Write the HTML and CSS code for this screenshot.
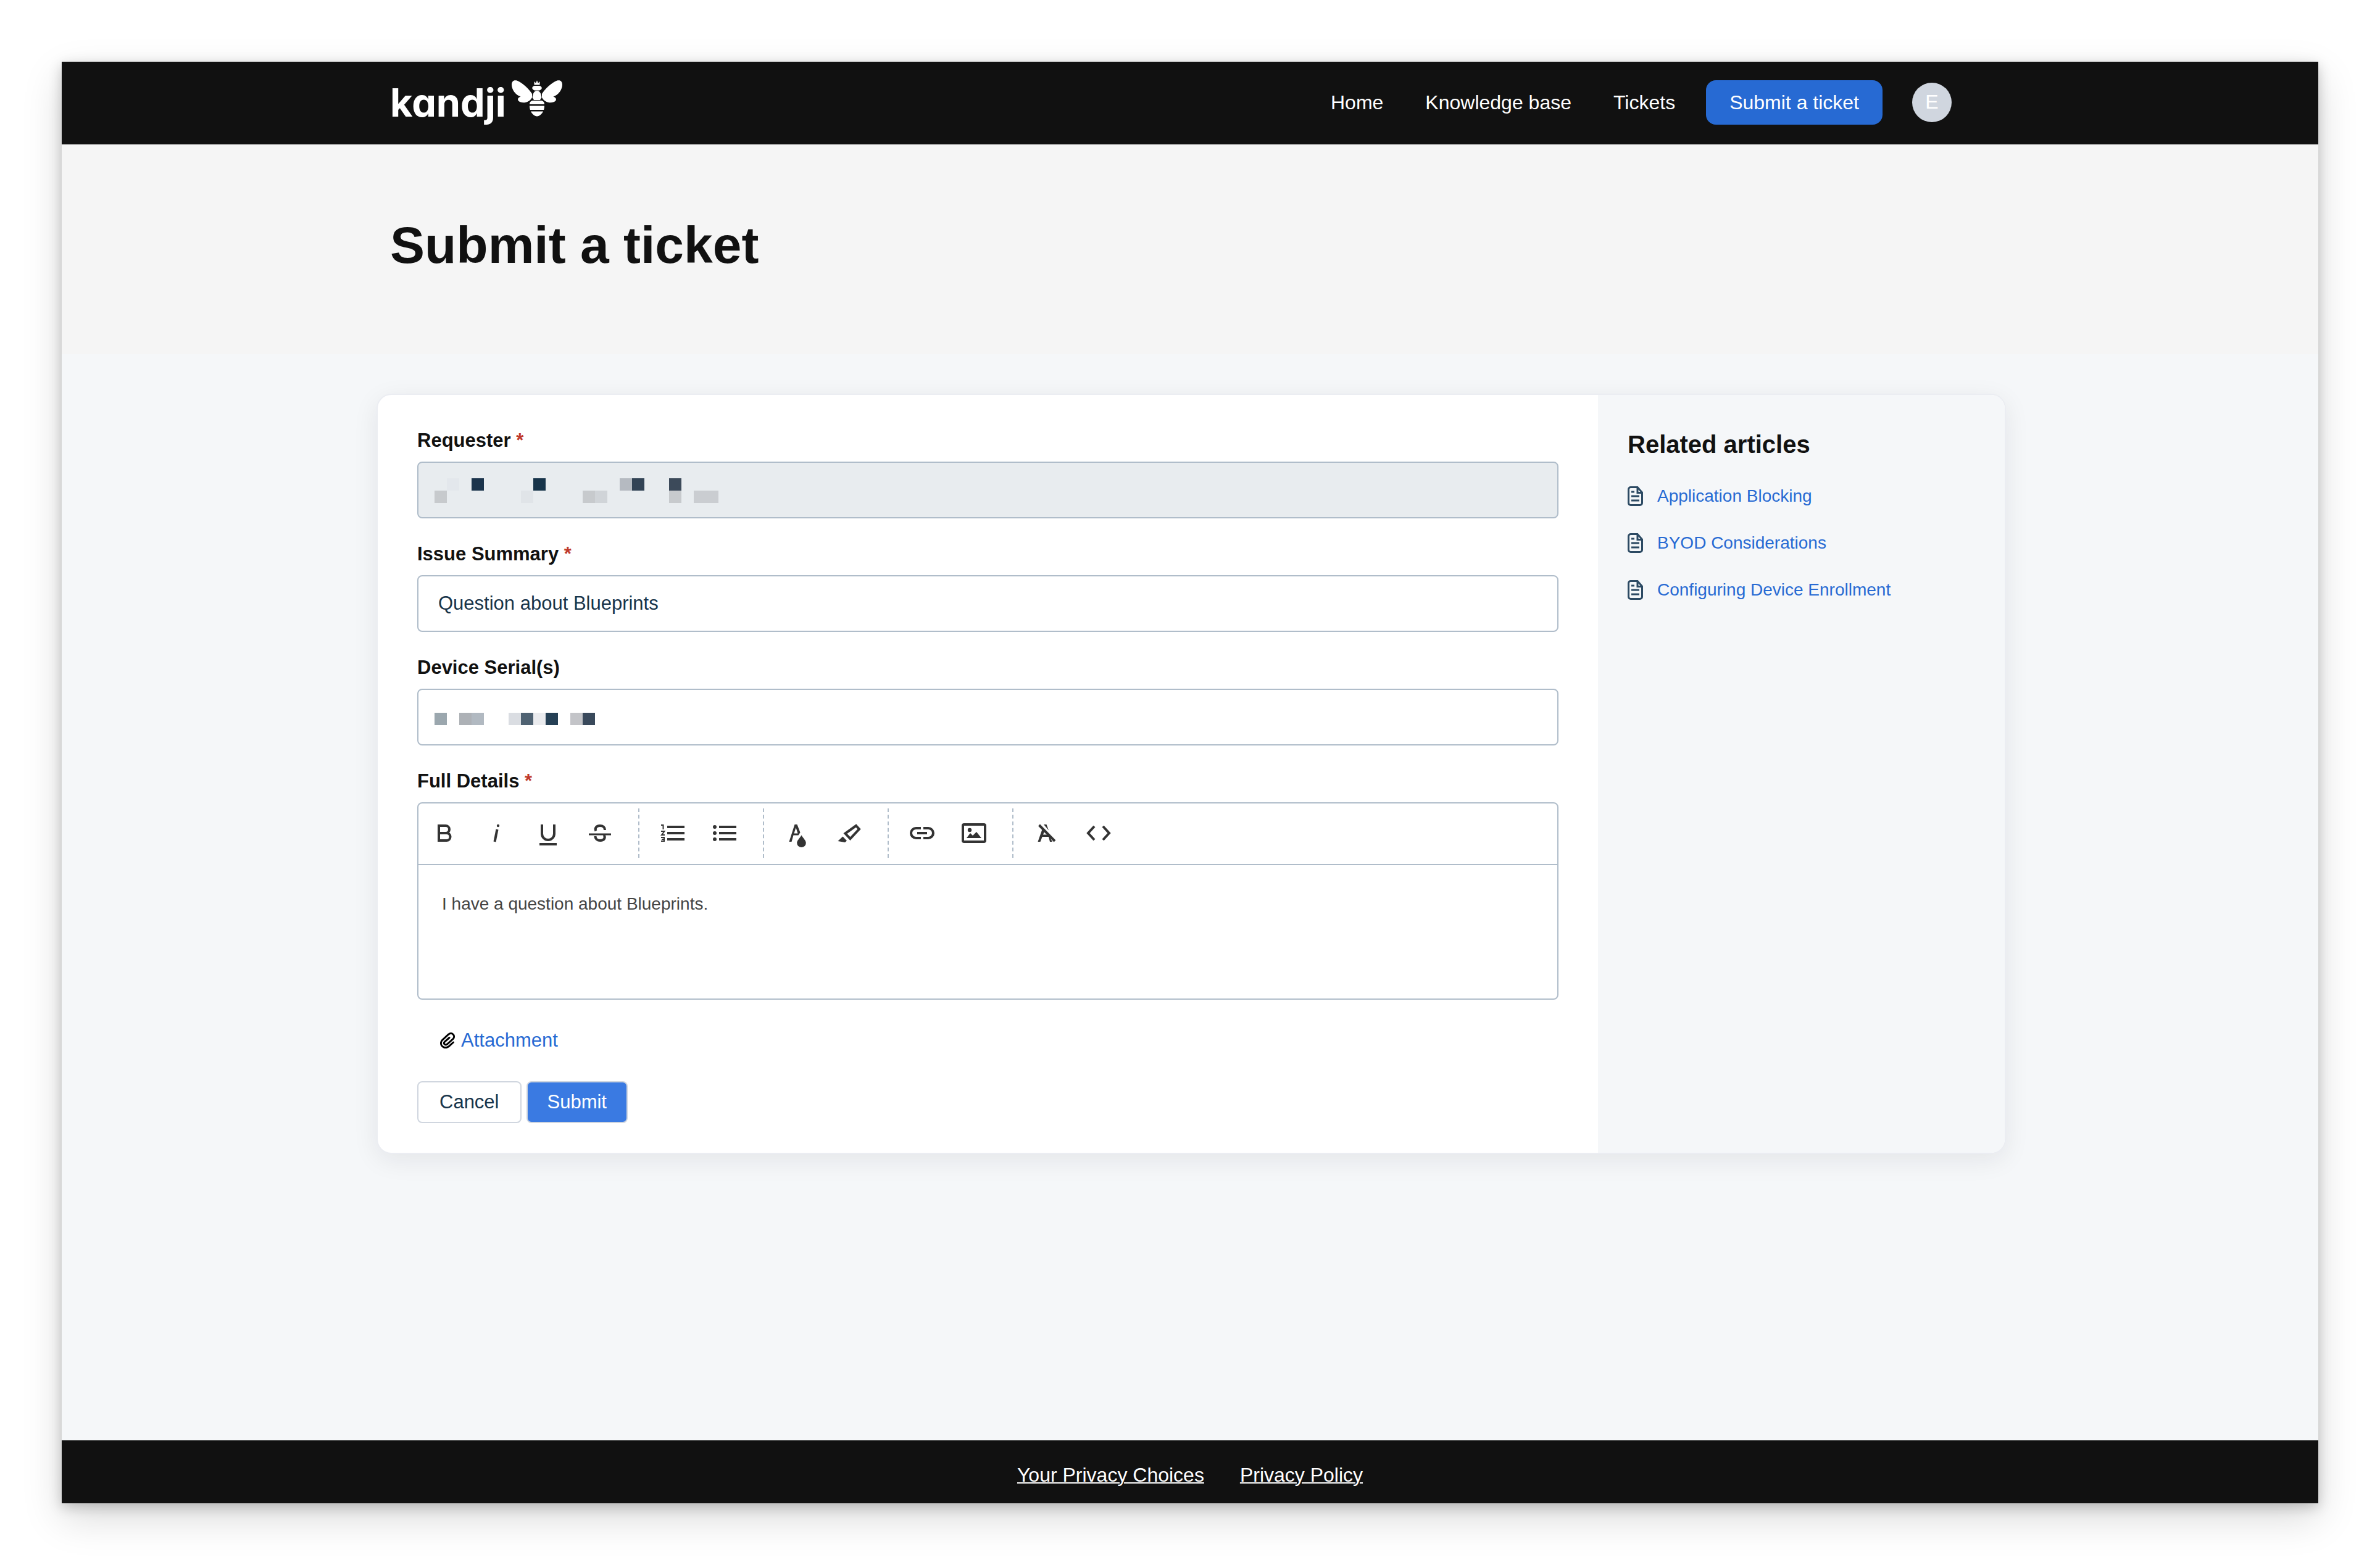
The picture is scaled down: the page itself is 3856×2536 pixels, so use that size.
FILE: index.html
```html
<!DOCTYPE html>
<html lang="en">
<head>
    <meta charset="UTF-8">
    <meta name="viewport" content="width=device-width, initial-scale=1.0">
    <title>Submit a ticket</title>
    <link rel="stylesheet" href="styles.css">
</head>
<body>
    <div class="page">
        <header class="header">
            <div class="container header-inner">
                <a class="logo" href="#">
                    <span class="logo-text">kandji</span>
                    <svg class="logo-bee" viewBox="0 0 82 59" aria-hidden="true">
                        <path id="wing" d="M33 22C28 14 17 4 9 .8 3-.8 0 2 0 7.500c0 7 6 16.500 14.500 19C10 28 9 31 11 33.500c5 4.500 17 4 22-5.500z"/>
                        <use href="#wing" transform="matrix(-1 0 0 1 82 0)"/>
                        <path d="M36.500 7.500V2l2.700 2.800L41 .3l1.800 4.500L45.500 2v5.500z"/>
                        <path d="M37 9h8c5 1 5 6 0 7.500h-8c-5-1.500-5-6.500 0-7.500z"/>
                        <path d="M41 17c-4.500 0-6.500 4-7.500 11l2.500 4h10l2.500-4c-1-7-3-11-7.500-11z"/>
                        <path d="M35 33h12c4 0 6 2.500 6 6H29c0-3.500 2-6 6-6z"/>
                        <path d="M29 41.500h24c0 2.500-.3 4.500-1 6.500H30c-.7-2-1-4-1-6.500z"/>
                        <path d="M31 50.500h20c-2 4-6 8-10 8s-8-4-10-8z"/>
                    </svg>
                </a>
                <nav class="nav">
                    <a href="#">Home</a>
                    <a href="#">Knowledge base</a>
                    <a href="#">Tickets</a>
                </nav>
                <a class="nav-btn" href="#">Submit a ticket</a>
                <button type="button" class="avatar" aria-label="Account">E</button>
            </div>
        </header>

        <section class="hero">
            <div class="container">
                <h1>Submit a ticket</h1>
            </div>
        </section>

        <main class="main">
            <div class="card">
                <form class="ticket-form">
                    <div class="field">
                        <label for="requester">Requester <span class="required">*</span></label>
                        <div class="input-wrap">
                            <input type="text" id="requester" name="requester" disabled>
                            <svg class="redacted redacted-requester" viewBox="0 0 460 40" aria-hidden="true">
                                <path fill="#e3e7ec" d="M20 0h20v20H20z"/>
                                <path fill="#1b344c" d="M60 0h20v20H60z"/>
                                <path fill="#17344a" d="M160 0h20v20h-20z"/>
                                <path fill="#b5bac1" d="M300 0h20v20h-20z"/>
                                <path fill="#324355" d="M320 0h20v20h-20z"/>
                                <path fill="#3c4a5a" d="M380 0h20v20h-20z"/>
                                <path fill="#e0e4e8" d="M140 20h20v20h-20z"/>
                                <path fill="#c7cacd" d="M0 20h20v20H0zM240 20h20v20h-20zM380 20h20v20h-20z"/>
                                <path fill="#d0d4d8" d="M260 20h20v20h-20z"/>
                                <path fill="#cacdd1" d="M420 20h40v20h-40z"/>
                            </svg>
                        </div>
                    </div>

                    <div class="field">
                        <label for="summary">Issue Summary <span class="required">*</span></label>
                        <input type="text" id="summary" name="summary" value="Question about Blueprints" required>
                    </div>

                    <div class="field">
                        <label for="serial">Device Serial(s)</label>
                        <div class="input-wrap">
                            <input type="text" id="serial" name="serial">
                            <svg class="redacted redacted-serial" viewBox="0 0 260 20" aria-hidden="true">
                                <path fill="#9ba7ae" d="M0 0h20v20H0z"/>
                                <path fill="#adb1b6" d="M40 0h20v20H40z"/>
                                <path fill="#b1b9c1" d="M60 0h20v20H60z"/>
                                <path fill="#dadde2" d="M120 0h20v20h-20z"/>
                                <path fill="#4f6272" d="M140 0h20v20h-20z"/>
                                <path fill="#eaebee" d="M160 0h20v20h-20z"/>
                                <path fill="#254055" d="M180 0h20v20h-20z"/>
                                <path fill="#c3c4c8" d="M220 0h20v20h-20z"/>
                                <path fill="#39495b" d="M240 0h20v20h-20z"/>
                            </svg>
                        </div>
                    </div>

                    <div class="field">
                        <label for="details">Full Details <span class="required">*</span></label>
                        <div class="editor">
                            <div class="toolbar">
                                <div class="tool-group">
                                    <button type="button" class="tool" aria-label="Bold">
                                        <svg viewBox="0 0 40 40"><path class="line" d="M11 8h11a6 6 0 0 1 0 12H11zM11 20h12.500a6 6 0 0 1 0 12H11z"/></svg>
                                    </button>
                                    <button type="button" class="tool" aria-label="Italic">
                                        <svg viewBox="0 0 40 40"><circle cx="23" cy="8" r="2.200"/><path class="line" d="M21.500 14l-4 20"/></svg>
                                    </button>
                                    <button type="button" class="tool" aria-label="Underline">
                                        <svg viewBox="0 0 40 40"><path class="line" d="M10 6v15a10 10 0 0 0 20 0V6M6 38h28"/></svg>
                                    </button>
                                    <button type="button" class="tool" aria-label="Strikethrough">
                                        <svg viewBox="0 0 40 40"><path class="line" d="M13.500 16.500C11 12 14.500 8 20 8c5 0 8 2.500 8 7M12.500 25c0 4.500 3.500 7 8 7 6.500 0 9-4.500 6-9"/><path d="M2 20.500h36v3H2z"/></svg>
                                    </button>
                                </div>
                                <div class="tool-group">
                                    <button type="button" class="tool" aria-label="Numbered list">
                                        <svg viewBox="0 0 40 40"><path d="M11 8h28v4H11zM11 18h28v4H11zM11 28h28v4H11z"/><path class="line thin" d="M1 7h3.500v7M1 17h5.500L2 23h5M1 27h5v6H1M2 30h4"/></svg>
                                    </button>
                                    <button type="button" class="tool" aria-label="Bulleted list">
                                        <svg viewBox="0 0 40 40"><path d="M11 8h28v4H11zM11 18h28v4H11zM11 28h28v4H11z"/><circle cx="4" cy="10" r="3"/><circle cx="4" cy="20" r="3"/><circle cx="4" cy="30" r="3"/></svg>
                                    </button>
                                </div>
                                <div class="tool-group">
                                    <button type="button" class="tool" aria-label="Font color">
                                        <svg viewBox="0 0 40 40"><path d="M6.500 34l9-28h4l5 13-3 4.500h-8L10.500 34zM17.500 11l-3 9.500h6z" fill-rule="evenodd"/><path d="M26.500 23.500c3 5 7.300 8.500 7.300 12.500a7.300 7 0 0 1-14.600 0c0-4 4.300-7.500 7.300-12.500z"/></svg>
                                    </button>
                                    <button type="button" class="tool" aria-label="Highlight">
                                        <svg viewBox="0 0 40 40"><path d="M1.500 33l8-7.500 6.500 7-3 2.500z"/><path class="line" d="M31 8l5 5.500-14.500 15.500-8-8.500z"/></svg>
                                    </button>
                                </div>
                                <div class="tool-group">
                                    <button type="button" class="tool" aria-label="Link">
                                        <svg viewBox="0 0 40 40"><path class="line" d="M18 12h-8a8 8 0 0 0 0 16h8M22 12h8a8 8 0 0 1 0 16h-8M12 20h16"/></svg>
                                    </button>
                                    <button type="button" class="tool" aria-label="Insert image">
                                        <svg viewBox="0 0 40 40"><rect class="line" x="2" y="6" width="36" height="28" rx="2"/><circle cx="13" cy="15" r="3.200"/><path d="M8 28l6-8 4 4 6-6 8 10z"/></svg>
                                    </button>
                                </div>
                                <div class="tool-group">
                                    <button type="button" class="tool" aria-label="Remove format">
                                        <svg viewBox="0 0 40 40"><path d="M5.500 34l7-20 3.500 3.500L9.500 34zM15 6h4.500l3.500 9.500zM9.500 22.500h13l6.500 11.500h-4l-2-8H9.500z"/><path class="line" d="M7.500 7L33 33"/></svg>
                                    </button>
                                    <button type="button" class="tool" aria-label="Source">
                                        <svg viewBox="0 0 40 40"><path class="line" d="M13 9L3 20l10 11M27 9l10 11-10 11"/></svg>
                                    </button>
                                </div>
                            </div>
                            <textarea id="details" name="details" required>I have a question about Blueprints.</textarea>
                        </div>
                    </div>

                    <div class="attachment">
                        <svg viewBox="0 0 24 26" aria-hidden="true"><path d="M21.500 16L14 22.800C6 28-2 20 3 13L13.500 3.200c6-4.500 12 2.300 7.500 7.300L11.500 19c-3.500 2.500-7-1-4-4L15 8.500"/></svg>
                        <a href="#">Attachment</a>
                    </div>

                    <div class="actions">
                        <button type="button" class="btn">Cancel</button>
                        <button type="submit" class="btn btn-primary">Submit</button>
                    </div>
                </form>

                <aside class="sidebar">
                    <h2>Related articles</h2>
                    <ul>
                        <li>
                            <svg viewBox="0 0 26 32" aria-hidden="true"><path d="M5 1.500h11L23.500 10v17a3.500 3.500 0 0 1-3.500 3.500H5A3.500 3.500 0 0 1 1.500 27V5A3.500 3.500 0 0 1 5 1.500zM16 2v8.500h7.500M6 9h5M6 16h13M6 23h13"/></svg>
                            <a href="#">Application Blocking</a>
                        </li>
                        <li>
                            <svg viewBox="0 0 26 32" aria-hidden="true"><path d="M5 1.500h11L23.500 10v17a3.500 3.500 0 0 1-3.500 3.500H5A3.500 3.500 0 0 1 1.500 27V5A3.500 3.500 0 0 1 5 1.500zM16 2v8.500h7.500M6 9h5M6 16h13M6 23h13"/></svg>
                            <a href="#">BYOD Considerations</a>
                        </li>
                        <li>
                            <svg viewBox="0 0 26 32" aria-hidden="true"><path d="M5 1.500h11L23.500 10v17a3.500 3.500 0 0 1-3.500 3.500H5A3.500 3.500 0 0 1 1.500 27V5A3.500 3.500 0 0 1 5 1.500zM16 2v8.500h7.500M6 9h5M6 16h13M6 23h13"/></svg>
                            <a href="#">Configuring Device Enrollment</a>
                        </li>
                    </ul>
                </aside>
            </div>
        </main>

        <footer class="footer">
            <a href="#">Your Privacy Choices</a>
            <a href="#">Privacy Policy</a>
        </footer>
    </div>
</body>
</html>
```
FILE: styles.css
```css
* {
    box-sizing: border-box;
}
body {
    margin: 0;
    padding: 100px;
    min-height: 100vh;
    display: flex;
    flex-direction: column;
    background-color: #fff;
    color: #111;
    font-family: "Liberation Sans", Arial, sans-serif;
    font-size: 32px;
    line-height: 36px;
}
a {
    color: #276ad3;
    text-decoration: none;
}
input, textarea, button {
    font-family: inherit;
}
.page {
    flex: 1;
    display: flex;
    flex-direction: column;
    background-color: #f5f7f9;
    box-shadow: 0 24px 60px rgba(0,0,0,0.15), 0 6px 20px rgba(0,0,0,0.2);
}
.container {
    width: 100%;
    max-width: 2640px;
    margin: 0 auto;
    padding: 0 86px 0 24px;
}

/* header */
.header {
    background-color: #111;
}
.header-inner {
    display: flex;
    align-items: center;
    height: 134px;
    padding-bottom: 3px;
}
.logo {
    display: flex;
    align-items: center;
    gap: 9px;
    margin-right: auto;
    color: #fff;
}
.logo-text {
    font-family: Inter, sans-serif;
    font-size: 63px;
    font-weight: 700;
    line-height: 64px;
    font-feature-settings: "cv11";
}
.logo-bee {
    width: 82px;
    height: 59px;
    margin-bottom: 12px;
    fill: #fff;
}
.nav {
    display: flex;
    gap: 68px;
    margin-right: 50px;
}
.nav a {
    color: #fff;
}
.nav-btn {
    padding: 18px 38px;
    border-radius: 16px;
    background-color: #276ad3;
    color: #fff;
}
.avatar {
    width: 64px;
    height: 64px;
    margin-left: 48px;
    padding: 0;
    border: none;
    border-radius: 50%;
    background-color: #d0d6df;
    color: #fff;
    font-size: 32px;
}

/* title band */
.hero {
    padding: 115px 0 129px;
    background-color: #f5f5f5;
}
.hero h1 {
    margin: 0;
    font-size: 84px;
    line-height: 96px;
}

/* ticket card */
.main {
    flex: 1;
    width: 100%;
    max-width: 2644px;
    margin: 0 auto;
    padding: 64px 0 64px 4px;
}
.card {
    display: flex;
    border: 2px solid #ebedf2;
    border-radius: 24px;
    background-color: #fff;
    box-shadow: 0 10px 40px rgba(20,20,43,0.08);
    overflow: hidden;
}
.ticket-form {
    width: 75%;
    padding: 56px 64px 48px;
}
.field {
    margin-bottom: 40px;
}
.field label {
    display: block;
    margin-bottom: 16px;
    font-size: 31px;
    font-weight: bold;
}
.required {
    color: #c0392b;
}
.input-wrap {
    position: relative;
}
input[type="text"] {
    display: block;
    width: 100%;
    height: 92px;
    padding: 0 32px;
    border: 2px solid #b0bdca;
    border-radius: 8px;
    background-color: #fff;
    color: #17344a;
    font-size: 31px;
}
input[type="text"]:disabled {
    background-color: #e8ecef;
}
.redacted {
    position: absolute;
    left: 28px;
}
.redacted-requester {
    top: 27px;
    width: 460px;
    height: 40px;
}
.redacted-serial {
    top: 39px;
    width: 260px;
    height: 20px;
}

/* editor */
.editor {
    border: 2px solid #b0bdca;
    border-radius: 8px;
}
.toolbar {
    display: flex;
    padding: 8px 0 10px;
    border-bottom: 2px solid #b0bdca;
}
.tool-group {
    display: flex;
}
.tool-group + .tool-group {
    margin-left: 20px;
    padding-left: 12px;
    border-left: 2px dashed #b0bdca;
}
.tool {
    display: flex;
    align-items: center;
    justify-content: center;
    width: 84px;
    height: 80px;
    padding: 0;
    border: none;
    background: none;
    cursor: pointer;
}
.tool svg {
    width: 40px;
    height: 40px;
    fill: #333;
    overflow: visible;
}
.tool .line {
    fill: none;
    stroke: #333;
    stroke-width: 4;
}
.tool .thin {
    stroke-width: 2;
}
textarea {
    display: block;
    width: 100%;
    height: 216px;
    padding: 42px 38px;
    border: none;
    border-radius: 8px;
    background: none;
    color: #444;
    font-size: 28px;
    line-height: 42px;
    resize: none;
}
.attachment {
    display: flex;
    align-items: center;
    gap: 10px;
    margin: 48px 0;
    padding-left: 37px;
    font-size: 31px;
}
.attachment svg {
    width: 24px;
    height: 26px;
    fill: none;
    stroke: #000;
    stroke-width: 3;
    stroke-linecap: round;
}
.actions {
    display: flex;
    gap: 8px;
}
.btn {
    height: 68px;
    padding: 0 34px;
    border: 2px solid #d0d6df;
    border-radius: 8px;
    background-color: #fff;
    color: #17344a;
    font-size: 31px;
    cursor: pointer;
}
.btn-primary {
    padding: 0 32px;
    background-color: #3a7ae2;
    color: #fff;
}

/* related articles */
.sidebar {
    width: 25%;
    padding: 56px 48px;
    background-color: #f5f7f9;
}
.sidebar h2 {
    margin: 0 0 42px;
    font-size: 40px;
    line-height: 48px;
}
.sidebar ul {
    display: flex;
    flex-direction: column;
    gap: 40px;
    margin: 0;
    padding: 0;
    list-style: none;
}
.sidebar li {
    display: flex;
    align-items: center;
    gap: 22px;
    font-size: 28px;
}
.sidebar svg {
    width: 26px;
    height: 32px;
    fill: none;
    stroke: #2c4a63;
    stroke-width: 3;
}

/* footer */
.footer {
    display: flex;
    justify-content: center;
    gap: 58px;
    padding: 38px 0 28px;
    background-color: #111;
}
.footer a {
    color: #fff;
    text-decoration: underline;
    text-decoration-thickness: 2px;
}
```
